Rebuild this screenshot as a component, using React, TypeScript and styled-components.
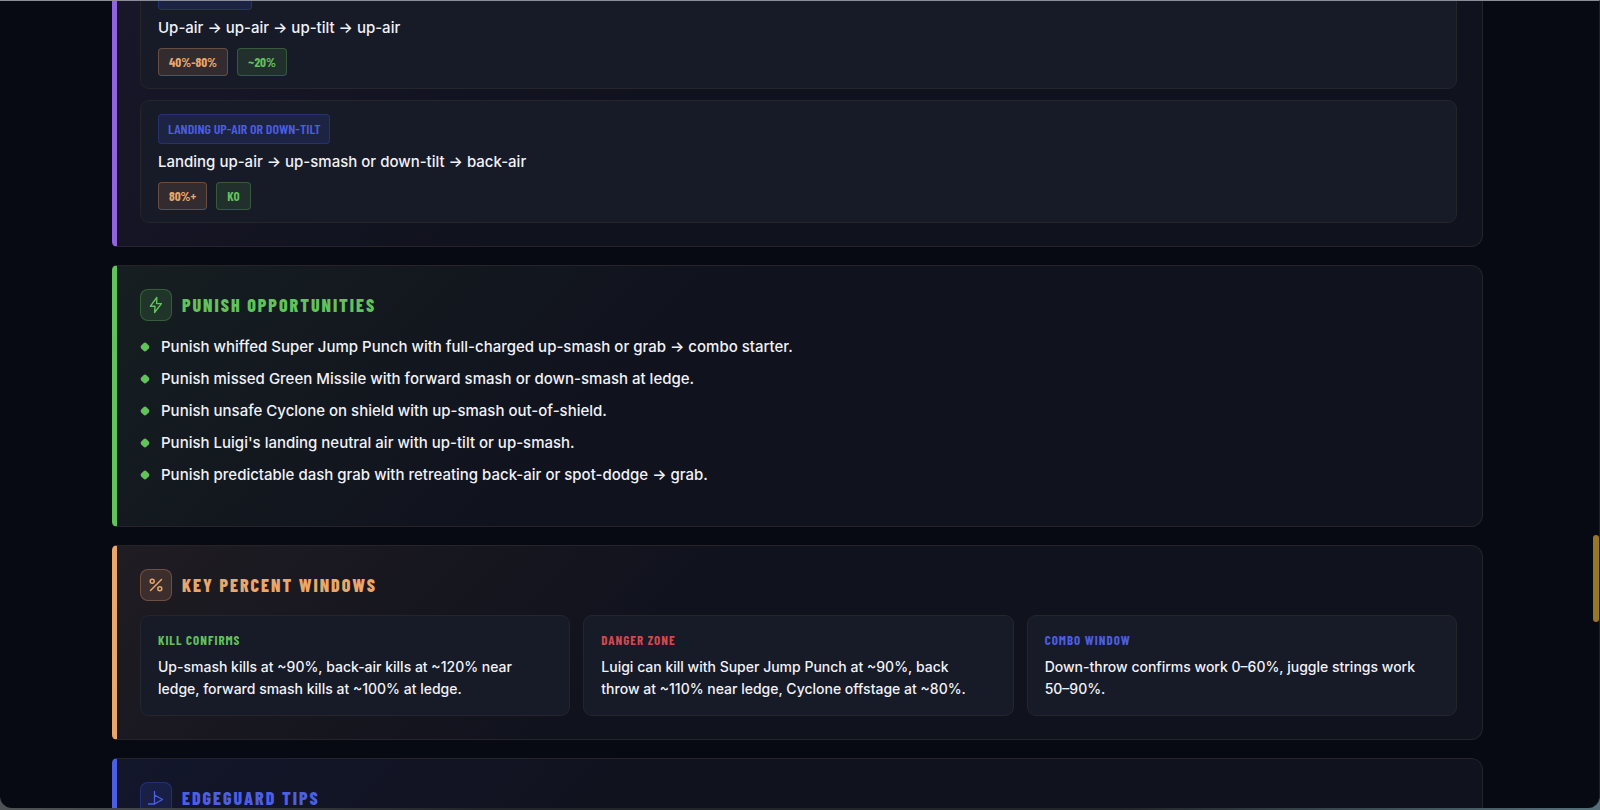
import React from 'react';
import styled, { createGlobalStyle } from 'styled-components';

const palette = {
  purple: { solid: '#9163dd', rgb: '139, 92, 220' },
  green: { solid: '#62c25c', rgb: '98, 194, 92' },
  orange: { solid: '#eaa76a', rgb: '234, 160, 106' },
  blue: { solid: '#4c5fe2', rgb: '60, 84, 230' },
  red: { solid: '#d04a50', rgb: '208, 74, 80' },
};

type Tone = keyof typeof palette;

const condensed = '"Barlow Condensed", "Roboto Condensed", "Open Sans Condensed", sans-serif';

const GlobalStyle = createGlobalStyle`
  *, *::before, *::after { box-sizing: border-box; }
  body {
    margin: 0;
    background: linear-gradient(90deg, #4f5355, #22252a 30%, #22252a 70%, #55707a);
    color: #f1f2f8;
    font-family: Inter, "Liberation Sans", sans-serif;
  }
  h2, h3, p, ul { margin: 0; padding: 0; }
`;

const Window = styled.div`
  position: relative;
  height: calc(100vh - 2px);
  overflow: hidden;
  padding-right: 4px;
  background: #070a13;
  border-top: 1px solid #8b8e99;
  border-right: 1px solid #1d2027;
  border-radius: 0 0 12px 12px;
`;

const ScrollThumb = styled.div`
  position: absolute;
  bottom: 23%;
  right: 0;
  width: 6px;
  height: 87px;
  border-radius: 3px;
  background: #967729;
`;

const Page = styled.main`
  display: flex;
  flex-direction: column;
  gap: 18px;
  width: 87%;
  max-width: 1371px;
  margin: -35px auto 0;
`;

const Panel = styled.section<{ $tone: Tone; $continued?: boolean }>`
  padding: ${p => (p.$continued ? '0' : '23px')} 25px 23px 23px;
  border: 1px solid #26242a;
  border-top-width: ${p => (p.$continued ? '0' : '1px')};
  border-left: 5px solid ${p => palette[p.$tone].solid};
  border-radius: ${p => (p.$continued ? '0 0 12px 5px' : '5px 12px 12px 5px')};
  background:
    linear-gradient(135deg, rgba(${p => palette[p.$tone].rgb}, 0.07), transparent 40%),
    #10121d;
`;

const PanelHeader = styled.header`
  display: flex;
  align-items: center;
  gap: 10px;
  margin-bottom: 14px;
`;

const IconBox = styled.span<{ $tone: Tone }>`
  display: grid;
  place-items: center;
  width: 32px;
  height: 32px;
  border: 1px solid rgba(${p => palette[p.$tone].rgb}, 0.3);
  border-radius: 8px;
  background: rgba(${p => palette[p.$tone].rgb}, 0.15);
  color: ${p => palette[p.$tone].solid};
`;

const PanelTitle = styled.h2<{ $tone: Tone }>`
  color: ${p => palette[p.$tone].solid};
  font: 800 18px/24px ${condensed};
  letter-spacing: 2px;
  text-transform: uppercase;
`;

const ComboList = styled.div`
  display: flex;
  flex-direction: column;
  gap: 11px;
`;

const Card = styled.article`
  border: 1px solid #26252b;
  border-radius: 9px;
  background: #171a27;
`;

const ComboCard = styled(Card)`
  display: flex;
  flex-direction: column;
  align-items: flex-start;
  padding: 13px 17px 12px;
`;

const Tag = styled.h3`
  margin-bottom: 6px;
  padding: 0 9px;
  border: 1px solid rgba(60, 84, 230, 0.3);
  border-radius: 4px;
  background: rgba(60, 84, 230, 0.15);
  color: ${palette.blue.solid};
  font: 600 14px/28px ${condensed};
  text-transform: uppercase;
`;

const Route = styled.p`
  font-size: 15px;
  font-weight: 500;
  line-height: 24px;
`;

const ChipRow = styled.div`
  display: flex;
  gap: 9px;
  margin-top: 8px;
`;

const Chip = styled.span<{ $tone: Tone }>`
  padding: 0 10px;
  border: 1px solid rgba(${p => palette[p.$tone].rgb}, 0.3);
  border-radius: 4px;
  background: rgba(${p => palette[p.$tone].rgb}, 0.13);
  color: ${p => palette[p.$tone].solid};
  font: 700 13px/26px ${condensed};
`;

const TipList = styled.ul`
  display: flex;
  flex-direction: column;
  gap: 8px;
  padding-bottom: 16px;
  list-style: none;
`;

const Tip = styled.li`
  display: flex;
  align-items: center;
  gap: 11px;
  font-size: 15px;
  font-weight: 500;
  line-height: 24px;
`;

const Bullet = styled.svg`
  width: 10px;
  height: 10px;
  fill: ${palette.green.solid};
`;

const WindowGrid = styled.div`
  display: grid;
  grid-template-columns: repeat(3, 1fr);
  gap: 13px;
`;

const WindowCard = styled(Card)`
  padding: 15px 26px 15px 17px;
`;

const WindowLabel = styled.h3<{ $tone: Tone }>`
  margin-bottom: 7px;
  color: ${p => palette[p.$tone].solid};
  font: 700 13px/18px ${condensed};
  letter-spacing: 1px;
  text-transform: uppercase;
`;

const WindowText = styled.p`
  font-size: 14px;
  font-weight: 500;
  line-height: 22px;
`;

const iconProps = {
  width: 18,
  height: 18,
  viewBox: '0 0 18 18',
  fill: 'none',
  stroke: 'currentColor',
  strokeLinecap: 'round' as const,
  strokeLinejoin: 'round' as const,
  'aria-hidden': true,
};

const BoltIcon = () => (
  <svg {...iconProps} strokeWidth={1.4}>
    <path d="M9.800 1.500 3.400 10.200H8L7.600 16.500 14.400 7.600H9.600Z" />
  </svg>
);

const PercentIcon = () => (
  <svg {...iconProps} strokeWidth={1.5}>
    <path d="M14.500 3.500 3.500 14.500" />
    <circle cx="5.2" cy="5.2" r="2" />
    <circle cx="12.8" cy="12.8" r="2" />
  </svg>
);

const FlagIcon = () => (
  <svg {...iconProps} strokeWidth={1.3}>
    <path d="M7.500 2.500V15M1.500 15H7.500L15.500 10.500 7.500 6" />
  </svg>
);

const combos = [
  { starter: 'Up-air juggle', route: 'Up-air → up-air → up-tilt → up-air', percent: '40%-80%', damage: '~20%' },
  {
    starter: 'Landing up-air or down-tilt',
    route: 'Landing up-air → up-smash or down-tilt → back-air',
    percent: '80%+',
    damage: 'KO',
  },
];

const punishes = [
  'Punish whiffed Super Jump Punch with full-charged up-smash or grab → combo starter.',
  'Punish missed Green Missile with forward smash or down-smash at ledge.',
  'Punish unsafe Cyclone on shield with up-smash out-of-shield.',
  "Punish Luigi's landing neutral air with up-tilt or up-smash.",
  'Punish predictable dash grab with retreating back-air or spot-dodge → grab.',
];

const percentWindows: { label: string; tone: Tone; text: string }[] = [
  {
    label: 'Kill confirms',
    tone: 'green',
    text: 'Up-smash kills at ~90%, back-air kills at ~120% near ledge, forward smash kills at ~100% at ledge.',
  },
  {
    label: 'Danger zone',
    tone: 'red',
    text: 'Luigi can kill with Super Jump Punch at ~90%, back throw at ~110% near ledge, Cyclone offstage at ~80%.',
  },
  {
    label: 'Combo window',
    tone: 'blue',
    text: 'Down-throw confirms work 0–60%, juggle strings work 50–90%.',
  },
];

function Header({ tone, title, icon }: { tone: Tone; title: string; icon: React.ReactNode }) {
  return (
    <PanelHeader>
      <IconBox $tone={tone}>{icon}</IconBox>
      <PanelTitle $tone={tone}>{title}</PanelTitle>
    </PanelHeader>
  );
}

export default function App() {
  return (
    <Window>
      <GlobalStyle />
      <Page>
        <Panel $tone="purple" $continued>
          <ComboList>
            {combos.map(combo => (
              <ComboCard key={combo.route}>
                <Tag>{combo.starter}</Tag>
                <Route>{combo.route}</Route>
                <ChipRow>
                  <Chip $tone="orange">{combo.percent}</Chip>
                  <Chip $tone="green">{combo.damage}</Chip>
                </ChipRow>
              </ComboCard>
            ))}
          </ComboList>
        </Panel>

        <Panel $tone="green">
          <Header tone="green" title="Punish opportunities" icon={<BoltIcon />} />
          <TipList>
            {punishes.map(text => (
              <Tip key={text}>
                <Bullet viewBox="0 0 10 10" aria-hidden>
                  <path d="M3.600 1.200Q5 0 6.400 1.200L8.800 3.600Q10 5 8.800 6.400L6.400 8.800Q5 10 3.600 8.800L1.200 6.400Q0 5 1.200 3.600Z" />
                </Bullet>
                {text}
              </Tip>
            ))}
          </TipList>
        </Panel>

        <Panel $tone="orange">
          <Header tone="orange" title="Key percent windows" icon={<PercentIcon />} />
          <WindowGrid>
            {percentWindows.map(item => (
              <WindowCard key={item.label}>
                <WindowLabel $tone={item.tone}>{item.label}</WindowLabel>
                <WindowText>{item.text}</WindowText>
              </WindowCard>
            ))}
          </WindowGrid>
        </Panel>

        <Panel $tone="blue">
          <Header tone="blue" title="Edgeguard tips" icon={<FlagIcon />} />
        </Panel>
      </Page>
      <ScrollThumb />
    </Window>
  );
}
